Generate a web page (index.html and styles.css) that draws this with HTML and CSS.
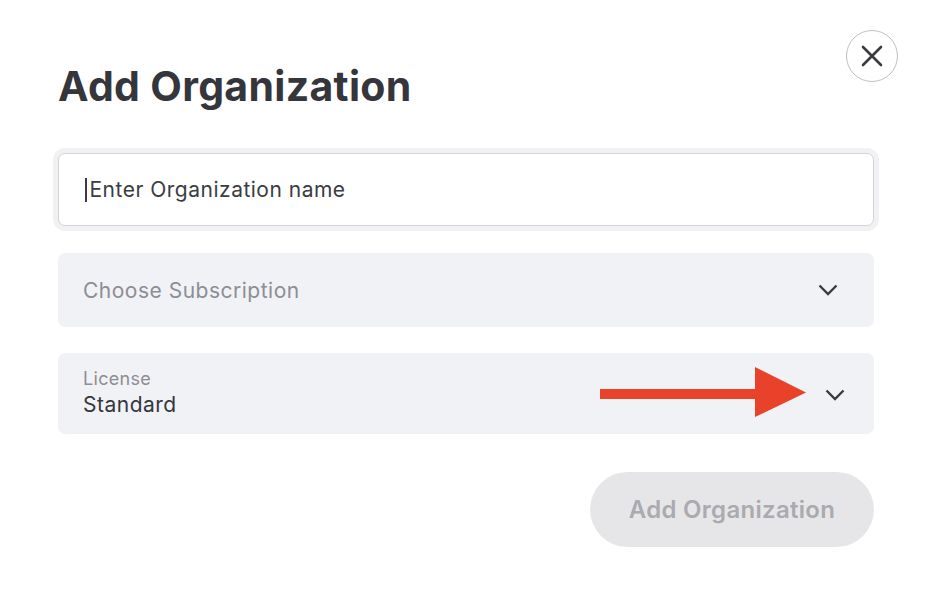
FILE: index.html
```html
<!DOCTYPE html>
<html>
<head>
<meta charset="utf-8">
<link rel="stylesheet" href="styles.css">
</head>
<body>
<div class="dialog">
  <button class="close" aria-label="Close">
    <svg width="22" height="22" viewBox="0 0 22 22"><path d="M2 2 L20 20 M20 2 L2 20" stroke="#3a3b41" stroke-width="2.6" stroke-linecap="round" fill="none"/></svg>
  </button>
  <h1 class="title">Add Organization</h1>
  <div class="field input">
    <span class="caret"></span><span class="input-text">Enter Organization name</span>
  </div>
  <div class="field select">
    <span class="placeholder">Choose Subscription</span>
    <svg class="chev" width="20" height="12" viewBox="0 0 20 12"><path d="M1.5 1.5 L10 10 L18.5 1.5" stroke="#3a3b41" stroke-width="2.4" fill="none"/></svg>
  </div>
  <div class="field select license">
    <div class="stack">
      <span class="label">License</span>
      <span class="value">Standard</span>
    </div>
    <svg class="chev chev2" width="20" height="12" viewBox="0 0 20 12"><path d="M1.5 1.5 L10 10 L18.5 1.5" stroke="#3a3b41" stroke-width="2.4" fill="none"/></svg>
    <svg class="arrow" width="210" height="52" viewBox="0 0 210 52"><rect x="0" y="22" width="160" height="10" fill="#e8432a"/><polygon points="155,0 206,25.5 155,50" fill="#e8432a"/></svg>
  </div>
  <div class="actions">
    <button class="primary">Add Organization</button>
  </div>
</div>
</body>
</html>
```
FILE: styles.css
```css
* { box-sizing: border-box; }
html, body { margin: 0; padding: 0; background: #ffffff; }
body { font-family: Inter, "Noto Sans", sans-serif; width: 926px; height: 598px; overflow: hidden; }
.dialog { position: relative; padding: 62px 52px 0 58px; }
.close {
  position: absolute; top: 30px; left: 846px;
  width: 52px; height: 52px; border-radius: 50%;
  border: 1.5px solid #bfbfc2; background: #fff;
  display: flex; align-items: center; justify-content: center; padding: 0;
}
.title {
  margin: 0; font-size: 41px; line-height: 48px; font-weight: 700;
  color: #35363c; letter-spacing: 0.3px;
}
.field { width: 816px; border-radius: 7px; display: flex; align-items: center; }
.input {
  margin-top: 43px; height: 73px; border: 1.5px solid #d3d3d8;
  box-shadow: 0 0 0 5px #f1f1f4; background: #fff; padding-left: 26px;
}
.caret { width: 1.5px; height: 24px; background: #3a3b41; margin-right: 3px; }
.input-text { font-size: 21px; letter-spacing: 0.5px; color: #3b3c42; }
.select {
  margin-top: 27px; height: 74px; background: #f1f2f6; padding: 0 36px 0 25px;
  justify-content: space-between;
}
.placeholder { font-size: 21px; letter-spacing: 0.5px; color: #8d8d93; }
.license { position: relative; height: 81px; margin-top: 26px; padding-right: 29px; }
.stack { display: flex; flex-direction: column; }
.label { font-size: 18px; letter-spacing: 0.3px; color: #8d8d93; line-height: 22px; margin-top: -2px; }
.value { font-size: 21px; letter-spacing: 0.5px; color: #35363c; line-height: 26px; margin-top: 2px; }
.chev2 { margin-top: 2px; }
.arrow { position: absolute; left: 542px; top: 14px; }
.actions { width: 816px; display: flex; justify-content: flex-end; margin-top: 38px; }
.primary {
  width: 284px; height: 75px; border-radius: 38px; border: none;
  background: #e6e6e9; color: #aaaaaf; font-family: Inter, sans-serif;
  font-size: 24px; font-weight: 600; letter-spacing: 0.3px;
}
```
